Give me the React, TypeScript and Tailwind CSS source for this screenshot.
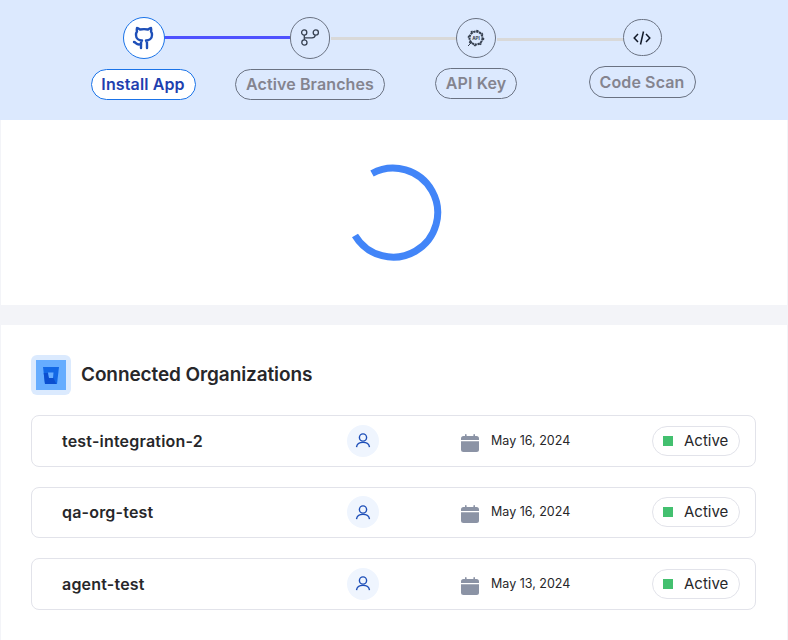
import { Github } from "lucide-react"
import type { ReactNode } from "react"

function BranchIcon() {
  return (
    <svg width="20" height="20" viewBox="0 0 20 20" fill="none" stroke="#374151" strokeWidth="1.300">
      <circle cx="4.200" cy="4.500" r="2.600" />
      <circle cx="15.800" cy="4.500" r="2.600" />
      <circle cx="4.400" cy="14.500" r="2.600" />
      <path d="M4.300 7.100v4.800" />
      <path d="M15.300 7.100c-.4 1.900-1.500 2.700-3.300 2.700H4.300" />
    </svg>
  )
}

function ApiIcon() {
  return (
    <svg width="22" height="22" viewBox="0 0 22 22" fill="none">
      <circle cx="11" cy="11" r="6.500" stroke="#374151" strokeWidth="2" strokeDasharray="2.400 0.600" />
      <circle cx="11" cy="11" r="7.600" stroke="#374151" strokeWidth="1.400" strokeDasharray="2 4" />
      <text x="11" y="12.600" textAnchor="middle" fontSize="4.600" fontWeight="700" fill="#374151" fontFamily="Inter, sans-serif">API</text>
      <path d="M3 19l4-4" stroke="#374151" strokeWidth="1" />
    </svg>
  )
}

function CodeIcon() {
  return (
    <svg width="18" height="14" viewBox="0 0 18 14" fill="none" stroke="#111827" strokeWidth="1.500">
      <path d="M5 3 1.200 7 5 11" />
      <path d="M13 3l3.800 4L13 11" />
      <path d="M10.500 .5 7.500 13.500" />
    </svg>
  )
}

function BitbucketIcon() {
  return (
    <svg width="16" height="17" viewBox="0 0 16 17">
      <path d="M0 0h16l-2 17H2z" fill="#1268e6" />
      <path d="M.7 6h4.300l1 5h4.500L13.300 17H2z" fill="#0b4fd0" />
      <path d="M5 5.500h5.500L10 11H6z" fill="#66adff" />
    </svg>
  )
}

function CalendarIcon() {
  return (
    <svg width="18" height="18" viewBox="0 0 18 18" fill="#8b93a5" className="mt-[4px]">
      <rect x="4" y="0" width="1.600" height="4" rx=".8" />
      <rect x="12.400" y="0" width="1.600" height="4" rx=".8" />
      <path d="M2.500 2h13A2.500 2.500 0 0 1 18 4.500V6H0V4.500A2.500 2.500 0 0 1 2.500 2Z" />
      <path d="M0 7.200h18v8.300a2.500 2.500 0 0 1-2.500 2.500h-13A2.500 2.500 0 0 1 0 15.500Z" />
    </svg>
  )
}

function UserIcon() {
  return (
    <svg width="16" height="15" viewBox="0 0 16 15" fill="none" stroke="#1e4fb8" strokeWidth="1.400">
      <circle cx="8" cy="4.500" r="3.600" />
      <path d="M1.500 14.200c.4-3 3-4.800 6.500-4.800s6.100 1.800 6.500 4.800" />
    </svg>
  )
}

type StepProps = {
  icon: ReactNode
  label: string
  circle: string
  pill: string
  active?: boolean
}

function Step({ icon, label, circle, pill, active }: StepProps) {
  return (
    <div className="flex w-[166px] flex-col items-center">
      <div
        className={`flex items-center justify-center rounded-full border ${circle} ${
          active ? "border-[#1a73e8] bg-white" : "border-gray-500"
        }`}
      >
        {icon}
      </div>
      <div
        className={`flex items-center justify-center rounded-full border pb-[1px] text-base font-semibold tracking-[0.12px] ${pill} ${
          active ? "border-[#1a73e8] bg-white text-[#1e40af]" : "border-gray-500 text-[#84848f]"
        }`}
      >
        {label}
      </div>
    </div>
  )
}

function Stepper() {
  return (
    <div className="relative flex h-[120px] justify-center bg-[#dce9fe]">
      <div className="absolute left-[164px] top-[36px] h-[3px] w-[126px] bg-[#4f52ff]" />
      <div className="absolute left-[331px] top-[37px] h-[3px] w-[125px] bg-[#d9d9d9]" />
      <div className="absolute left-[497px] top-[38px] h-[3px] w-[126px] bg-[#d9d9d9]" />
      <div className="relative mr-[2px] flex w-[664px] pt-[17px]">
        <Step
          active
          icon={<Github size={24} color="#1e4fb8" strokeWidth={2.400} />}
          label="Install App"
          circle="h-[42px] w-[42px]"
          pill="mt-[10px] mr-[2px] h-[31px] w-[105px]"
        />
        <Step
          icon={<BranchIcon />}
          label="Active Branches"
          circle="h-[42px] w-[40px]"
          pill="mt-[10px] h-[31px] w-[150px]"
        />
        <Step
          icon={<ApiIcon />}
          label="API Key"
          circle="mt-[1px] h-[40px] w-[40px]"
          pill="mt-[10px] h-[31px] w-[82px]"
        />
        <Step
          icon={<CodeIcon />}
          label="Code Scan"
          circle="mt-[2px] h-[37px] w-[39px]"
          pill="mt-[10px] h-[32px] w-[107px]"
        />
      </div>
    </div>
  )
}

function OrgRow({ name, date }: { name: string; date: string }) {
  return (
    <div className="flex h-[51.500px] items-center rounded-lg border border-[#e2e3ea] pl-[29px] pr-[15px]">
      <div className="w-[286px] pl-[1px] text-base font-semibold tracking-[0.2px] text-[#27272a]">{name}</div>
      <div className="flex h-8 w-8 items-center justify-center rounded-full bg-[#eff5fe]">
        <UserIcon />
      </div>
      <div className="ml-[82px] flex w-[191px] items-center">
        <CalendarIcon />
        <span className="ml-[12px] pt-[1px] text-[12.500px] text-[#27272a]">{date}</span>
      </div>
      <div className="flex h-[30px] w-[88px] items-center rounded-full border border-[#e2e3ea] pl-[10px]">
        <span className="h-[10px] w-[10px] bg-[#43c06f]" />
        <span className="ml-[11px] text-[15px] font-normal text-[#27272a]">Active</span>
      </div>
    </div>
  )
}

export default function App() {
  return (
    <div className="h-[640px] overflow-hidden bg-[#f3f4f8] font-['Inter',sans-serif]">
      <Stepper />
      <div className="mx-[1px] flex h-[185px] items-center justify-center bg-white">
        <svg width="96" height="96" viewBox="0 0 96 96" fill="none" className="overflow-visible">
          <path d="M26 8.500A44.500 44.500 0 1 1 9 70.500" stroke="#4285f8" strokeWidth="7" />
        </svg>
      </div>
      <div className="mx-[1px] mt-[20px] h-[315px] bg-white pl-[30px] pr-[31px] pt-[30px]">
        <div className="flex items-center">
          <div className="flex h-10 w-10 items-center justify-center rounded-md bg-[#dbeafe]">
            <div className="flex h-[30px] w-[30px] items-center justify-center bg-[#66adff]">
              <BitbucketIcon />
            </div>
          </div>
          <h2 className="ml-[10px] text-[19px] font-semibold tracking-[-0.1px] text-[#27272a]">Connected Organizations</h2>
        </div>
        <div className="mt-[20px] flex flex-col gap-[20px]">
          <OrgRow name="test-integration-2" date="May 16, 2024" />
          <OrgRow name="qa-org-test" date="May 16, 2024" />
          <OrgRow name="agent-test" date="May 13, 2024" />
        </div>
      </div>
    </div>
  )
}
